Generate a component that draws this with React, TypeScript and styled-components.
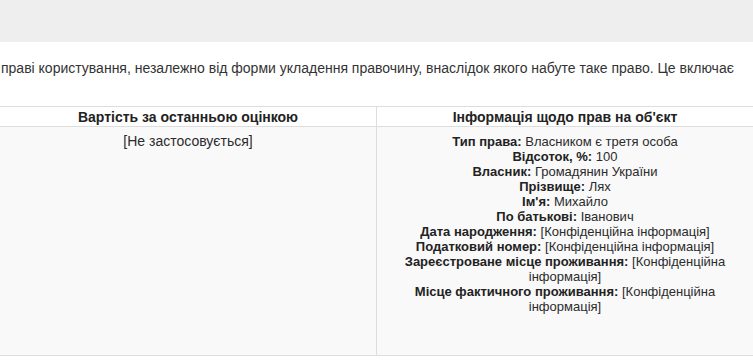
import { createGlobalStyle, styled } from "styled-components";

const GlobalStyle = createGlobalStyle`
  html, body {
    margin: 0;
    padding: 0;
    background: #ffffff;
    font-family: "Liberation Sans", Arial, sans-serif;
    color: #333333;
  }
`;

const rights = [
  { label: "Тип права", value: "Власником є третя особа" },
  { label: "Відсоток, %", value: "100" },
  { label: "Власник", value: "Громадянин України" },
  { label: "Прізвище", value: "Лях" },
  { label: "Ім'я", value: "Михайло" },
  { label: "По батькові", value: "Іванович" },
  { label: "Дата народження", value: "[Конфіденційна інформація]" },
  { label: "Податковий номер", value: "[Конфіденційна інформація]" },
  { label: "Зареєстроване місце проживання", value: "[Конфіденційна інформація]" },
  { label: "Місце фактичного проживання", value: "[Конфіденційна інформація]" },
];

const App = () => {
  return (
    <Page>
      <GlobalStyle />
      <TopBand />
      <Intro>
        праві користування, незалежно від форми укладення правочину, внаслідок якого набуте таке право. Це включає
      </Intro>
      <Table>
        <thead>
          <tr>
            <HeadCell>Вартість за останньою оцінкою</HeadCell>
            <HeadCell>Інформація щодо прав на об'єкт</HeadCell>
          </tr>
        </thead>
        <tbody>
          <tr>
            <BodyCell $size={14}>[Не застосовується]</BodyCell>
            <BodyCell $size={13}>
              {rights.map((r) => (
                <InfoLine key={r.label}>
                  <b>{r.label}:</b> {r.value}
                </InfoLine>
              ))}
            </BodyCell>
          </tr>
        </tbody>
      </Table>
    </Page>
  );
};

export default App;

const Page = styled.div`
  width: 753px;
  height: 363px;
  overflow: hidden;
`;

const TopBand = styled.div`
  height: 42px;
  background: #eeeeee;
`;

const Intro = styled.p`
  margin: 18px 0 0 1px;
  font-size: 14px;
  line-height: 16px;
  white-space: nowrap;
  color: #333333;
`;

const Table = styled.table`
  margin-top: 30px;
  width: 753px;
  border-collapse: collapse;
  table-layout: fixed;
`;

const HeadCell = styled.th`
  border-top: 1px solid #dddddd;
  border-bottom: 1px solid #dddddd;
  & + & {
    border-left: 1px solid #dddddd;
  }
  padding: 2px 8px 1px;
  font-size: 14px;
  line-height: 16px;
  font-weight: bold;
  text-align: center;
  color: #222222;
`;

const BodyCell = styled.td<{ $size: number }>`
  background: #f9f9f9;
  border-bottom: 1px solid #dddddd;
  & + & {
    border-left: 1px solid #dddddd;
  }
  height: 229px;
  padding: 7px 8px;
  box-sizing: border-box;
  vertical-align: top;
  text-align: center;
  font-size: ${(p) => p.$size}px;
  line-height: 15px;
  color: #2b2b2b;
`;

const InfoLine = styled.div`
  b {
    font-weight: bold;
    color: #222222;
  }
`;
